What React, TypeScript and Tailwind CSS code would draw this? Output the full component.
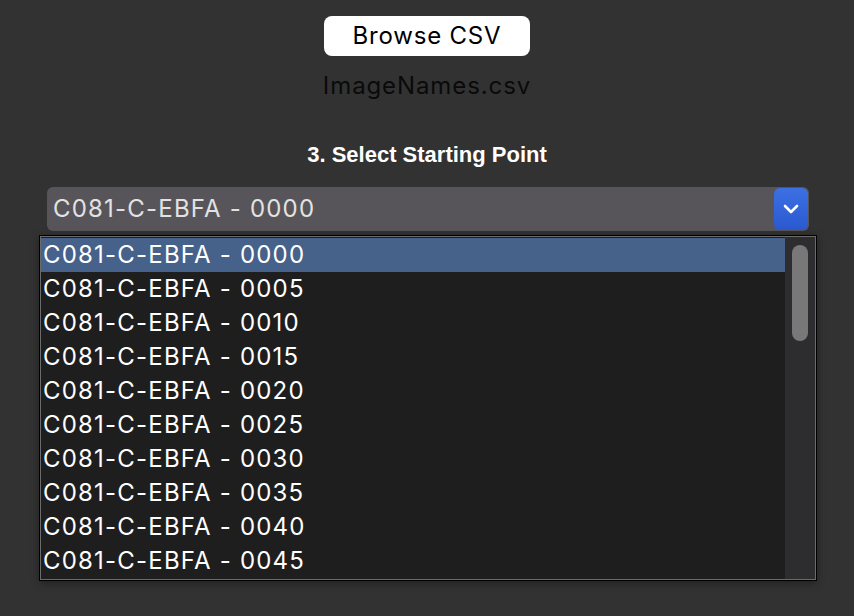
const options = ['0000', '0005', '0010', '0015', '0020', '0025', '0030', '0035', '0040', '0045'].map(
  (n) => `C081-C-EBFA - ${n}`
);

export default function App() {
  const selected = options[0];

  return (
    <div className="min-h-[616px] w-full bg-[#323232] font-['Inter',sans-serif] flex flex-col">
      {/* file picker */}
      <div className="flex flex-col items-center pt-4">
        <button className="w-[206px] h-10 rounded-lg bg-white text-black text-[24px] tracking-[0.8px] leading-none">
          Browse CSV
        </button>
        <div className="mt-4 text-[24px] tracking-[0.9px] leading-[28px] text-[#0a0a0a]">ImageNames.csv</div>
        <h3 className="mt-[42px] font-['Liberation_Sans',Arial,sans-serif] font-bold text-[22px] leading-[26px] text-white">
          3. Select Starting Point
        </h3>
      </div>

      {/* dropdown */}
      <div className="mt-[19px] ml-[47px] w-[762px] h-[44px] rounded-md bg-[#57555a] flex items-center justify-between pl-[6px] pr-[1px]">
        <span className="text-[24px] tracking-[1.2px] text-[#e2e2e2]">{selected}</span>
        <span className="w-[34px] h-[42px] rounded-md bg-gradient-to-b from-[#3d70e4] to-[#2b59d0] flex items-center justify-center">
          <svg width="16" height="10" viewBox="0 0 16 10" fill="none">
            <polyline
              points="2,2 8,8 14,2"
              stroke="white"
              strokeWidth="2.6"
              strokeLinecap="round"
              strokeLinejoin="round"
            />
          </svg>
        </span>
      </div>

      {/* open list */}
      <div className="mt-1 ml-[39px] w-[778px] h-[346px] border border-black shadow-[0_2px_8px_rgba(0,0,0,0.35)]">
        <div className="h-full border border-[#6b6b6b] bg-[#1e1e1e] flex">
          <ul className="flex-1 pt-[1px]">
            {options.map((o) => (
              <li
                key={o}
                className={`h-[34px] pl-[2px] flex items-center text-[24px] tracking-[1.2px] text-white ${
                  o === selected ? 'bg-[#46618a]' : ''
                }`}
              >
                {o}
              </li>
            ))}
          </ul>
          <div className="w-[30px] bg-[#2d2d2f] pt-[8px] flex justify-center">
            <div className="w-4 h-[96px] rounded-full bg-[#787878]" />
          </div>
        </div>
      </div>
    </div>
  );
}
